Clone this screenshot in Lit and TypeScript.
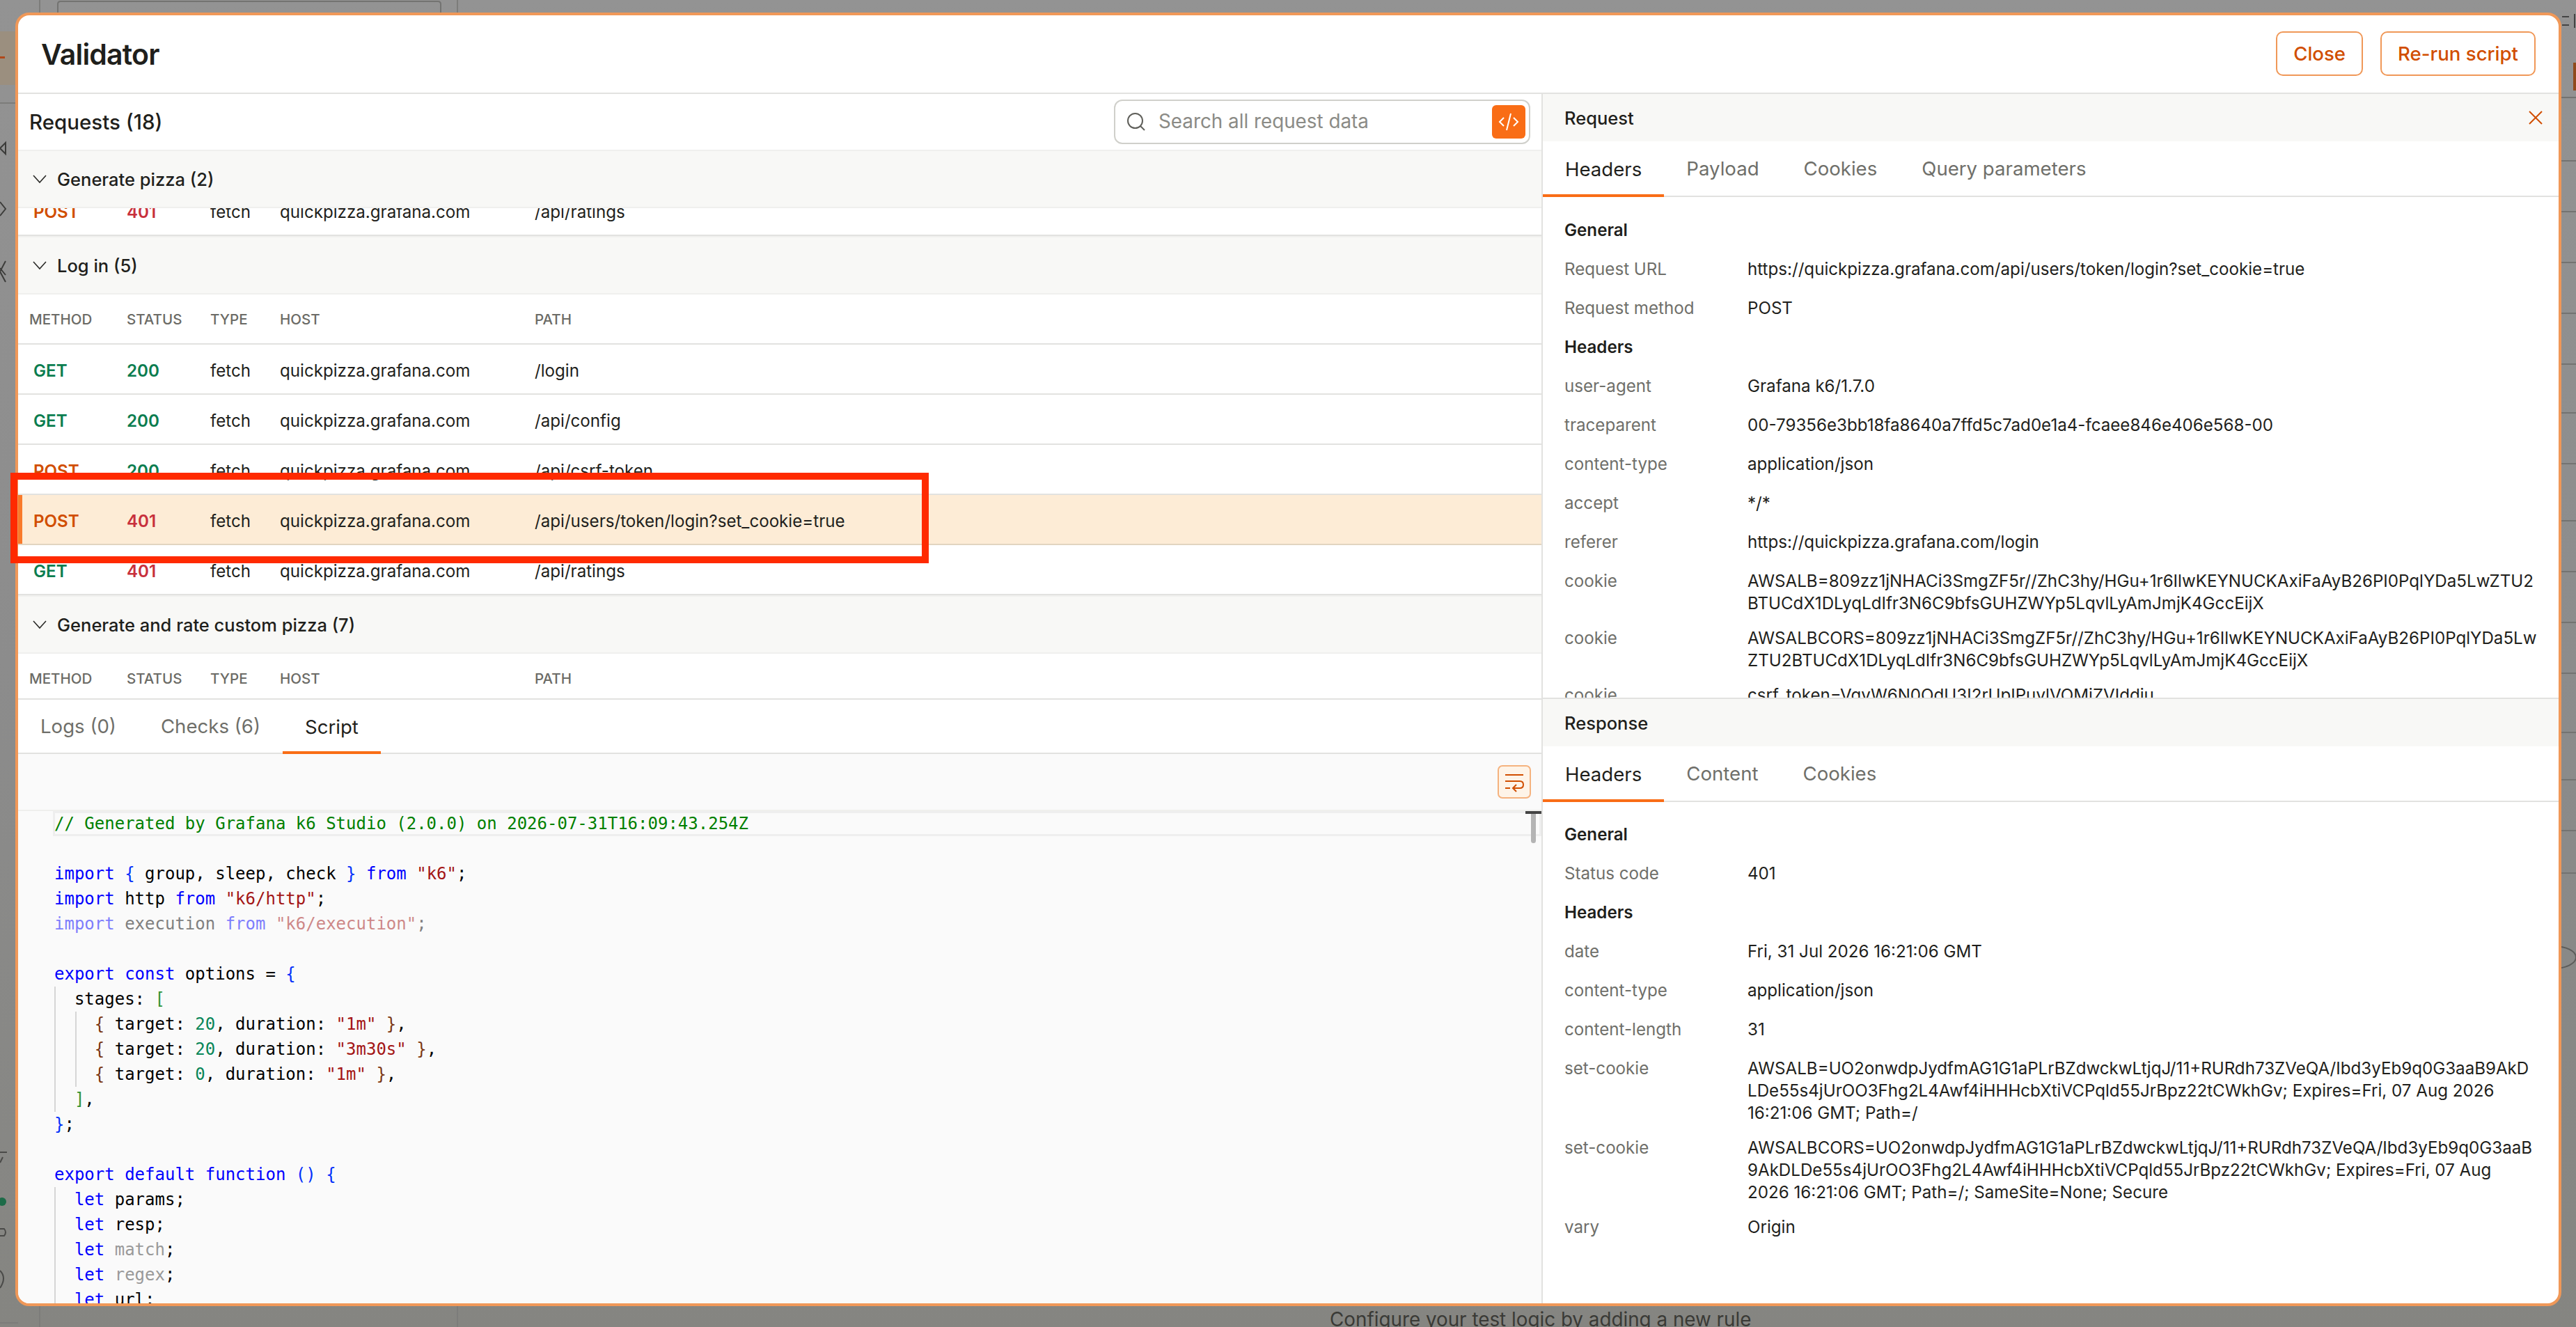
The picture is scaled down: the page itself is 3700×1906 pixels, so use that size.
import { LitElement, html, css, svg } from "lit";
import { customElement } from "lit/decorators.js";

type Req = { method: string; status: number; path: string; selected?: boolean };
type Tok = [string, string];

const HOST = "quickpizza.grafana.com";

const loginRequests: Req[] = [
  { method: "GET", status: 200, path: "/login" },
  { method: "GET", status: 200, path: "/api/config" },
  { method: "POST", status: 200, path: "/api/csrf-token" },
  { method: "POST", status: 401, path: "/api/users/token/login?set_cookie=true", selected: true },
  { method: "GET", status: 401, path: "/api/ratings" },
];

const requestRows: [string, string][] = [
  ["Request URL", "https://quickpizza.grafana.com/api/users/token/login?set_cookie=true"],
  ["Request method", "POST"],
];

const requestHeaders: [string, string][] = [
  ["user-agent", "Grafana k6/1.7.0"],
  ["traceparent", "00-79356e3bb18fa8640a7ffd5c7ad0e1a4-fcaee846e406e568-00"],
  ["content-type", "application/json"],
  ["accept", "*/*"],
  ["referer", "https://quickpizza.grafana.com/login"],
  ["cookie", "AWSALB=809zz1jNHACi3SmgZF5r//ZhC3hy/HGu+1r6IlwKEYNUCKAxiFaAyB26PI0PqlYDa5LwZTU2\nBTUCdX1DLyqLdIfr3N6C9bfsGUHZWYp5LqvlLyAmJmjK4GccEijX"],
  ["cookie", "AWSALBCORS=809zz1jNHACi3SmgZF5r//ZhC3hy/HGu+1r6IlwKEYNUCKAxiFaAyB26PI0PqlYDa5Lw\nZTU2BTUCdX1DLyqLdIfr3N6C9bfsGUHZWYp5LqvlLyAmJmjK4GccEijX"],
  ["cookie", "csrf_token=VqvW6N0OdU3I2rUpIPuvlVOMjZVIddju"],
];

const responseHeaders: [string, string][] = [
  ["date", "Fri, 31 Jul 2026 16:21:06 GMT"],
  ["content-type", "application/json"],
  ["content-length", "31"],
  ["set-cookie", "AWSALB=UO2onwdpJydfmAG1G1aPLrBZdwckwLtjqJ/11+RURdh73ZVeQA/Ibd3yEb9q0G3aaB9AkD\nLDe55s4jUrOO3Fhg2L4Awf4iHHHcbXtiVCPqld55JrBpz22tCWkhGv; Expires=Fri, 07 Aug 2026\n16:21:06 GMT; Path=/"],
  ["set-cookie", "AWSALBCORS=UO2onwdpJydfmAG1G1aPLrBZdwckwLtjqJ/11+RURdh73ZVeQA/Ibd3yEb9q0G3aaB\n9AkDLDe55s4jUrOO3Fhg2L4Awf4iHHHcbXtiVCPqld55JrBpz22tCWkhGv; Expires=Fri, 07 Aug\n2026 16:21:06 GMT; Path=/; SameSite=None; Secure"],
  ["vary", "Origin"],
];

// token classes follow the monaco light theme
const code: Tok[][] = [
  [["com", "// Generated by Grafana k6 Studio (2.0.0) on 2026-07-31T16:09:43.254Z"]],
  [],
  [["kw", "import"], ["", " "], ["b1", "{"], ["", " group, sleep, check "], ["b1", "}"], ["", " "], ["kw", "from"], ["", " "], ["str", "\"k6\""], ["", ";"]],
  [["kw", "import"], ["", " http "], ["kw", "from"], ["", " "], ["str", "\"k6/http\""], ["", ";"]],
  [["kw fade", "import"], ["unused", " execution "], ["kw fade", "from"], ["", " "], ["str fade", "\"k6/execution\""], ["unused", ";"]],
  [],
  [["kw", "export"], ["", " "], ["kw", "const"], ["", " options = "], ["b1", "{"]],
  [["", "  stages: "], ["b2", "["]],
  [["", "    "], ["b3", "{"], ["", " target: "], ["num", "20"], ["", ", duration: "], ["str", "\"1m\""], ["", " "], ["b3", "}"], ["", ","]],
  [["", "    "], ["b3", "{"], ["", " target: "], ["num", "20"], ["", ", duration: "], ["str", "\"3m30s\""], ["", " "], ["b3", "}"], ["", ","]],
  [["", "    "], ["b3", "{"], ["", " target: "], ["num", "0"], ["", ", duration: "], ["str", "\"1m\""], ["", " "], ["b3", "}"], ["", ","]],
  [["", "  "], ["b2", "]"], ["", ","]],
  [["b1", "}"], ["", ";"]],
  [],
  [["kw", "export"], ["", " "], ["kw", "default"], ["", " "], ["kw", "function"], ["", " "], ["b1", "()"], ["", " "], ["b1", "{"]],
  [["", "  "], ["kw", "let"], ["", " params;"]],
  [["", "  "], ["kw", "let"], ["", " resp;"]],
  [["", "  "], ["kw", "let"], ["", " "], ["unused2", "match"], ["", ";"]],
  [["", "  "], ["kw", "let"], ["", " "], ["unused2", "regex"], ["", ";"]],
  [["", "  "], ["kw", "let"], ["", " url;"]],
];

@customElement("app-root")
export class AppRoot extends LitElement {
  static styles = css`
    :host {
      display: block;
      position: relative;
      width: 3700px;
      height: 1906px;
      overflow: hidden;
      font-family: Inter, "Liberation Sans", sans-serif;
      font-size: 24.15px;
      color: #1f1f1c;
      background: linear-gradient(#939393, #8c8c8c 50%, #858581);
    }
    .backdrop {
      position: absolute;
      inset: 0;
    }
    .hint {
      position: absolute;
      left: 1910px;
      top: 1877px;
      font-size: 27.8px;
      line-height: 36px;
      white-space: nowrap;
      color: #3a3a36;
    }
    .dialog {
      position: absolute;
      left: 22px;
      top: 18px;
      width: 3657px;
      height: 1858px;
      box-sizing: border-box;
      border: 4px solid #f09858;
      border-radius: 20px;
      background: #fff;
      overflow: hidden;
      display: flex;
      flex-direction: column;
    }
    .dialog-head {
      flex: none;
      height: 113px;
      box-sizing: border-box;
      border-bottom: 2px solid #e2e2e0;
      padding: 0 33px 0 33px;
      display: flex;
      align-items: center;
      justify-content: space-between;
    }
    h1 {
      margin: 0;
      font-size: 41px;
      font-weight: 600;
      letter-spacing: -0.8px;
    }
    .actions {
      display: flex;
      gap: 25px;
      margin-top: -2px;
    }
    button.outline {
      height: 64px;
      box-sizing: border-box;
      padding: 0 23px;
      border: 2px solid #f09858;
      border-radius: 10px;
      background: #fff;
      color: #d14e00;
      font: 500 27.6px Inter, sans-serif;
    }
    .body {
      flex: 1;
      min-height: 0;
      display: grid;
      grid-template-columns: 2190px 1fr;
    }
    .left {
      display: flex;
      flex-direction: column;
      min-height: 0;
      overflow: hidden;
      border-right: 2px solid #e2e2e0;
    }
    .req-head {
      flex: none;
      height: 80px;
      box-sizing: border-box;
      padding: 0 16px;
      display: flex;
      align-items: center;
      justify-content: space-between;
    }
    .req-title {
      font-size: 29.5px;
      font-weight: 500;
    }
    .search {
      width: 598px;
      height: 64px;
      box-sizing: border-box;
      border: 2px solid #d0d0cb;
      border-radius: 12px;
      display: flex;
      align-items: center;
      padding: 0 5px 0 16px;
      gap: 18px;
      color: #8b8b86;
      font-size: 27.8px;
    }
    .search .ph {
      flex: 1;
      margin-top: -2px;
    }
    .code-btn {
      width: 48px;
      height: 48px;
      border-radius: 6px;
      background: #f96d16;
      display: flex;
      align-items: center;
      justify-content: center;
    }
    .scroller {
      flex: none;
      height: 790px;
      box-sizing: border-box;
      border-bottom: 2px solid #e2e2e0;
      overflow: hidden;
    }
    .group {
      height: 84px;
      box-sizing: border-box;
      border-top: 2px solid #f0f0ee;
      border-bottom: 2px solid #f0f0ee;
      background: #f8f8f6;
      display: flex;
      align-items: center;
      gap: 15px;
      padding-left: 21px;
      font-size: 25.5px;
      font-weight: 500;
    }
    .row {
      display: grid;
      grid-template-columns: 156px 120px 100px 366px 1fr;
      align-items: center;
      height: 72px;
      box-sizing: border-box;
      padding-top: 4px;
      border-bottom: 2px solid #e2e2e0;
      font-size: 24.15px;
      white-space: nowrap;
    }
    .row > :first-child {
      padding-left: 22px;
    }
    .row.head > :first-child {
      padding-left: 16px;
    }
    .row.head {
      height: 72px;
      padding-top: 0;
      font-size: 20.5px;
      font-weight: 500;
      color: #6b6b66;
    }
    .row.selected {
      background: #fdecd6;
      border-bottom-color: #e2d5c0;
      box-shadow: inset 6px 0 0 #f97a2a;
    }
    .clip {
      height: 40px;
      overflow: hidden;
    }
    .clip .row {
      margin-top: -32px;
    }
    .m-get,
    .s-ok {
      color: #0b7d4f;
      font-weight: 600;
    }
    .m-post {
      color: #d14e00;
      font-weight: 600;
    }
    .s-bad {
      color: #c8303c;
      font-weight: 600;
    }
    .tabs {
      flex: none;
      display: flex;
      height: 80px;
      box-sizing: border-box;
      border-bottom: 2px solid #e2e2e0;
      font-size: 27.6px;
      color: #6f6f6a;
    }
    .tabs.bottom {
      height: 78px;
    }
    .tab {
      padding: 0 32px;
      height: 100%;
      display: flex;
      align-items: center;
      box-sizing: border-box;
    }
    .tab.on {
      color: #1f1f1c;
      box-shadow: inset 0 -4px 0 #f96d16;
      height: calc(100% + 2px);
    }
    .editor {
      flex: 1;
      min-height: 0;
      background: #fafafa;
      display: flex;
      flex-direction: column;
      position: relative;
    }
    .toolbar {
      flex: none;
      height: 82px;
      box-sizing: border-box;
      display: flex;
      align-items: center;
      justify-content: flex-end;
      padding: 0 15px 0 0;
      border-bottom: 2px solid #efefed;
    }
    .wrap-btn {
      width: 48px;
      height: 48px;
      box-sizing: border-box;
      border: 2px solid #f5b27e;
      border-radius: 7px;
      background: #fef4e8;
      display: flex;
      align-items: center;
      justify-content: center;
    }
    .code {
      margin: 0;
      padding-left: 52px;
      font: 24px/36px "DejaVu Sans Mono", "Liberation Mono", monospace;
      color: #000;
      white-space: pre;
    }
    .ln {
      height: 36px;
    }
    .ln.current {
      margin-left: -2px;
      padding-left: 2px;
      box-shadow: 0 0 0 3px #eeeeee inset;
    }
    .com { color: #008000; }
    .kw { color: #0000ff; }
    .str { color: #a31515; }
    .num { color: #098658; }
    .b1 { color: #0431fa; }
    .b2 { color: #319331; }
    .b3 { color: #7b3814; }
    .fade { opacity: 0.5; }
    .unused { color: #808080; }
    .unused2 { color: #999; }
    .guide {
      position: absolute;
      width: 2px;
      background: #d6d6d6;
    }
    .thumb {
      position: absolute;
      left: 2173px;
      top: 82px;
      width: 7px;
      height: 46px;
      border-radius: 4px;
      background: #b4b4b4;
    }
    .tick {
      position: absolute;
      left: 2165px;
      top: 82px;
      width: 23px;
      height: 4px;
      background: #444;
    }
    .right {
      display: flex;
      flex-direction: column;
      min-height: 0;
      overflow: hidden;
    }
    .pane-title {
      flex: none;
      height: 68px;
      box-sizing: border-box;
      background: #f8f8f6;
      padding: 0 23px 0 31px;
      display: flex;
      align-items: center;
      justify-content: space-between;
      font-size: 25.5px;
      font-weight: 500;
    }
    .pane-title.response {
      border-top: 2px solid #e2e2e0;
      height: 70px;
    }
    .details {
      padding: 19px 0 0 31px;
    }
    .details.request {
      padding-top: 20px;
    }
    .req-pane {
      flex: none;
      height: 867px;
      overflow: hidden;
      display: flex;
      flex-direction: column;
    }
    .res-pane {
      flex: 1;
      min-height: 0;
      display: flex;
      flex-direction: column;
    }
    .kv {
      display: grid;
      grid-template-columns: 263px 1fr;
      min-height: 56px;
      box-sizing: border-box;
      padding: 12px 0 6px;
      line-height: 32px;
    }
    .kv .k {
      color: #6f6f6a;
    }
    .kv .v {
      white-space: pre-line;
    }
    .kv.heading {
      font-weight: 600;
    }
    .annotation {
      position: absolute;
      left: 15px;
      top: 679px;
      width: 1319px;
      height: 130px;
      box-sizing: border-box;
      border: 10px solid #ff2a00;
      pointer-events: none;
    }
  `;

  private chevron() {
    return html`<svg width="20" height="20" viewBox="0 0 20 20" fill="none" stroke="#2b2b28" stroke-width="1.6">
      <path d="M1 5l9 10 9-10" />
    </svg>`;
  }

  private requestRow(r: Req) {
    return html`<div class="row ${r.selected ? "selected" : ""}">
      <span class="${r.method === "GET" ? "m-get" : "m-post"}">${r.method}</span>
      <span class="${r.status < 400 ? "s-ok" : "s-bad"}">${r.status}</span>
      <span>fetch</span>
      <span>${HOST}</span>
      <span>${r.path}</span>
    </div>`;
  }

  private tableHead() {
    return html`<div class="row head">
      <span>METHOD</span><span>STATUS</span><span>TYPE</span><span>HOST</span><span>PATH</span>
    </div>`;
  }

  private kv(rows: [string, string][]) {
    return rows.map(
      ([k, v]) => html`<div class="kv"><span class="k">${k}</span><span class="v">${v}</span></div>`
    );
  }

  private backdropArt() {
    const lines = [140, 231, 304, 377, 450, 523, 593, 666, 748, 821, 894, 967, 1052, 1120, 1193, 1254];
    return html`<svg class="backdrop" width="3700" height="1906" viewBox="0 0 3700 1906" fill="none">
      <rect x="0" y="45" width="22" height="77" fill="#9b8f7f" />
      <rect x="0" y="81" width="7" height="3" fill="#b0481a" />
      <path d="M0 148H22M57 0V18M657 0V18M57 1876V1906M657 1876V1906M0 1900H26" stroke="#7c7c7a" stroke-width="2" />
      <path d="M83 18V6Q83 2 87 2H629Q633 2 633 6V18" stroke="#737371" stroke-width="2" />
      <path d="M8 205L0 213L8 221V205ZM0 290L8 300L0 310M8 375L0 390L8 405M0 385L8 395" stroke="#3c3c3a" stroke-width="2" />
      <path d="M0 1655H10M4 1662L0 1670M0 1765H6Q10 1770 6 1775H0M0 1825Q10 1835 0 1850" stroke="#4a4a48" stroke-width="2" />
      <circle cx="3" cy="1726" r="6" fill="#1d6b48" />
      ${lines.map((y) => svg`<path d="M3679 ${y}H3700" stroke="#737371" stroke-width="2" />`)}
      <ellipse cx="3668" cy="1375" rx="32" ry="16" stroke="#5c5c5a" stroke-width="2" />
      <rect x="3696" y="90" width="4" height="40" fill="#8f4a1c" />
      <path d="M3680 24H3690M3680 36H3690M3698 20V40" stroke="#444" stroke-width="2" />
    </svg>`;
  }

  render() {
    return html`
      ${this.backdropArt()}
      <div class="hint">Configure your test logic by adding a new rule</div>
      <div class="dialog">
        <div class="dialog-head">
          <h1>Validator</h1>
          <div class="actions">
            <button class="outline">Close</button>
            <button class="outline">Re-run script</button>
          </div>
        </div>
        <div class="body">
          <div class="left">
            <div class="req-head">
              <span class="req-title">Requests (18)</span>
              <div class="search">
                <svg width="28" height="28" viewBox="0 0 28 28" fill="none" stroke="#5f5f5a" stroke-width="2">
                  <circle cx="12.5" cy="12.5" r="10.5" />
                  <path d="M20 20l6 6" />
                </svg>
                <span class="ph">Search all request data</span>
                <span class="code-btn">
                  <svg width="30" height="26" viewBox="0 0 30 26" fill="none" stroke="#fff" stroke-width="2">
                    <path d="M8 7l-6 6 6 6M22 7l6 6-6 6M18 1l-6 24" />
                  </svg>
                </span>
              </div>
            </div>
            <div class="scroller">
              <div class="group">${this.chevron()}<span>Generate pizza (2)</span></div>
              <div class="clip">${this.requestRow({ method: "POST", status: 401, path: "/api/ratings" })}</div>
              <div class="group">${this.chevron()}<span>Log in (5)</span></div>
              ${this.tableHead()} ${loginRequests.map((r) => this.requestRow(r))}
              <div class="group">${this.chevron()}<span>Generate and rate custom pizza (7)</span></div>
              ${this.tableHead()}
            </div>
            <div class="tabs bottom">
              <div class="tab">Logs (0)</div>
              <div class="tab">Checks (6)</div>
              <div class="tab on">Script</div>
            </div>
            <div class="editor">
              <div class="toolbar">
                <span class="wrap-btn">
                  <svg width="30" height="30" viewBox="0 0 30 30" fill="none" stroke="#d14e00" stroke-width="2">
                    <path d="M2 5H28M2 14H23Q28 14 28 19T23 24H14M2 24H9M18 19l-5 5 5 5" />
                  </svg>
                </span>
              </div>
              <div class="guide" style="left:52px;top:334px;height:180px"></div>
              <div class="guide" style="left:82px;top:370px;height:108px"></div>
              <div class="guide" style="left:52px;top:622px;height:180px"></div>
              <div class="thumb"></div>
              <div class="tick"></div>
              <div class="code">${code.map(
                (toks, i) => html`<div class="ln ${i === 0 ? "current" : ""}">${toks.map(
                  ([c, t]) => html`<span class="${c}">${t}</span>`
                )}</div>`
              )}</div>
            </div>
          </div>
          <div class="right">
            <div class="req-pane">
              <div class="pane-title">
                <span>Request</span>
                <svg width="20" height="20" viewBox="0 0 20 20" fill="none" stroke="#d14e00" stroke-width="2">
                  <path d="M1 1l18 18M19 1L1 19" />
                </svg>
              </div>
              <div class="tabs">
                <div class="tab on">Headers</div>
                <div class="tab">Payload</div>
                <div class="tab">Cookies</div>
                <div class="tab">Query parameters</div>
              </div>
              <div class="details request">
                <div class="kv heading">General</div>
                ${this.kv(requestRows)}
                <div class="kv heading">Headers</div>
                ${this.kv(requestHeaders)}
              </div>
            </div>
            <div class="res-pane">
              <div class="pane-title response"><span>Response</span></div>
              <div class="tabs">
                <div class="tab on">Headers</div>
                <div class="tab">Content</div>
                <div class="tab">Cookies</div>
              </div>
              <div class="details">
                <div class="kv heading">General</div>
                ${this.kv([["Status code", "401"]])}
                <div class="kv heading">Headers</div>
                ${this.kv(responseHeaders)}
              </div>
            </div>
          </div>
        </div>
      </div>
      <div class="annotation"></div>
    `;
  }
}
